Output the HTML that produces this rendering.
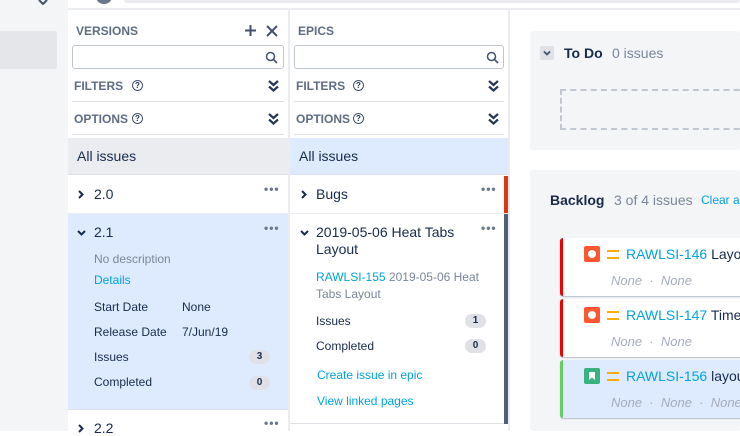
<!DOCTYPE html>
<html><head><meta charset="utf-8"><style>
*{box-sizing:border-box;margin:0;padding:0}
body{width:740px;height:431px;overflow:hidden;background:#fff;font-family:"Liberation Sans",sans-serif;color:#172b4d;position:relative;font-size:13px}
.a{position:absolute}
.h{font-size:12px;font-weight:bold;color:#5e6c84}
.s{border:1px solid #c1c7d0;border-radius:3px;height:24px;background:#fff}
.ln{height:1px;background:#dfe1e6}
.dots{color:#6b778c;font-size:12px;letter-spacing:1px;font-weight:bold}
.badge{background:#dfe1e6;border-radius:9px;width:21px;height:14px;font-size:10px;font-weight:bold;text-align:center;line-height:14px;color:#172b4d}
.blue{color:#00a3e0}
.card{left:560px;width:190px;height:58px;background:#fff;box-shadow:0 1px 1px rgba(9,30,66,.25);border-radius:3px}
.none{font-style:italic;color:#a5adba;font-size:13px}
.q{width:11px;height:11px;border:1.3px solid #42526e;border-radius:50%;font-size:8px;text-align:center;line-height:9px;font-weight:bold}
</style></head><body>
<div class="a" style="left:0;top:0;width:68px;height:431px;background:#f4f5f7"></div>
<div class="a" style="left:0;top:31px;width:57px;height:38px;background:#e4e6ea;border-radius:0 3px 3px 0"></div>
<svg class="a" style="left:38px;top:0" width="10" height="5"><path d="M1 0l4 4 4-4" fill="none" stroke="#42526e" stroke-width="2"/></svg>
<div class="a" style="left:68px;top:0;width:672px;height:10px;background:#fff;border-bottom:2px solid #ebecf0"></div>
<div class="a" style="left:96px;top:-10px;width:16px;height:14px;border-radius:50%;background:#6b778c"></div>
<div class="a" style="left:124px;top:0;width:616px;height:3px;background:#ebecf0;border-radius:0 0 3px 3px"></div>
<div class="a" style="left:288px;top:10px;width:2px;height:421px;background:#ebecf0"></div>
<div class="a" style="left:508px;top:10px;width:2px;height:421px;background:#ebecf0"></div>

<!-- versions -->
<div class="a h" style="left:76px;top:24px">VERSIONS</div>
<svg class="a" style="left:244px;top:24px" width="13" height="13"><path d="M6.5 1v11M1 6.5h11" stroke="#42526e" stroke-width="2"/></svg>
<svg class="a" style="left:266px;top:25px" width="12" height="12"><path d="M1 1l10 10M11 1l-10 10" stroke="#42526e" stroke-width="2"/></svg>
<div class="a s" style="left:72px;top:45px;width:212px"></div>
<svg class="a" style="left:265px;top:51px" width="13" height="13"><circle cx="5.5" cy="5.5" r="4" fill="none" stroke="#42526e" stroke-width="1.5"/><path d="M8.5 8.5l3.5 3.5" stroke="#42526e" stroke-width="1.6"/></svg>
<div class="a h" style="left:74px;top:79px">FILTERS</div>
<div class="a q" style="left:132px;top:80px">?</div>
<svg class="a" style="left:268px;top:80px" width="11" height="12"><path d="M1 1l4.5 4 4.5-4M1 6.5l4.5 4 4.5-4" fill="none" stroke="#253858" stroke-width="2.2"/></svg>
<div class="a ln" style="left:72px;top:101px;width:212px"></div>
<div class="a h" style="left:74px;top:112px">OPTIONS</div>
<div class="a q" style="left:132px;top:113px">?</div>
<svg class="a" style="left:268px;top:113px" width="11" height="12"><path d="M1 1l4.5 4 4.5-4M1 6.5l4.5 4 4.5-4" fill="none" stroke="#253858" stroke-width="2.2"/></svg>
<div class="a ln" style="left:72px;top:134px;width:212px"></div>
<div class="a" style="left:68px;top:138px;width:220px;height:37px;background:#ebecf0;border-bottom:1px solid #dfe1e6"></div>
<div class="a" style="left:77px;top:148px;font-size:14px">All issues</div>
<div class="a" style="left:68px;top:176px;width:220px;height:38px;border-bottom:1px solid #ebecf0"></div>
<svg class="a" style="left:78px;top:190px" width="6" height="9"><path d="M1 1l3.5 3.5L1 8" fill="none" stroke="#172b4d" stroke-width="2"/></svg>
<div class="a" style="left:94px;top:186px;font-size:14px">2.0</div>
<div class="a dots" style="left:264px;top:182px">•••</div>
<div class="a" style="left:68px;top:214px;width:220px;height:195px;background:#deebff"></div>
<svg class="a" style="left:77px;top:230px" width="9" height="6"><path d="M1 1l3.5 3.5L8 1" fill="none" stroke="#172b4d" stroke-width="2"/></svg>
<div class="a" style="left:94px;top:224px;font-size:14px">2.1</div>
<div class="a dots" style="left:264px;top:221px">•••</div>
<div class="a" style="left:94px;top:252px;color:#7a869a;font-size:12px">No description</div>
<div class="a blue" style="left:94px;top:273px;font-size:12px">Details</div>
<div class="a" style="left:94px;top:300px;font-size:12px">Start Date</div>
<div class="a" style="left:182px;top:300px;font-size:12px">None</div>
<div class="a" style="left:94px;top:325px;font-size:12px">Release Date</div>
<div class="a" style="left:182px;top:325px;font-size:12px">7/Jun/19</div>
<div class="a" style="left:94px;top:350px;font-size:12px">Issues</div>
<div class="a badge" style="left:249px;top:350px">3</div>
<div class="a" style="left:94px;top:375px;font-size:12px">Completed</div>
<div class="a badge" style="left:249px;top:376px">0</div>
<div class="a" style="left:68px;top:409px;width:220px;height:1px;background:#dfe1e6"></div>
<svg class="a" style="left:78px;top:424px" width="6" height="9"><path d="M1 1l3.5 3.5L1 8" fill="none" stroke="#172b4d" stroke-width="2"/></svg>
<div class="a" style="left:94px;top:420px;font-size:14px">2.2</div>
<div class="a dots" style="left:264px;top:416px">•••</div>

<!-- epics -->
<div class="a h" style="left:298px;top:24px">EPICS</div>
<div class="a s" style="left:294px;top:45px;width:210px"></div>
<svg class="a" style="left:486px;top:51px" width="13" height="13"><circle cx="5.5" cy="5.5" r="4" fill="none" stroke="#42526e" stroke-width="1.5"/><path d="M8.5 8.5l3.5 3.5" stroke="#42526e" stroke-width="1.6"/></svg>
<div class="a h" style="left:296px;top:79px">FILTERS</div>
<div class="a q" style="left:353px;top:80px">?</div>
<svg class="a" style="left:488px;top:80px" width="11" height="12"><path d="M1 1l4.5 4 4.5-4M1 6.5l4.5 4 4.5-4" fill="none" stroke="#253858" stroke-width="2.2"/></svg>
<div class="a ln" style="left:294px;top:101px;width:210px"></div>
<div class="a h" style="left:296px;top:112px">OPTIONS</div>
<div class="a q" style="left:353px;top:113px">?</div>
<svg class="a" style="left:488px;top:113px" width="11" height="12"><path d="M1 1l4.5 4 4.5-4M1 6.5l4.5 4 4.5-4" fill="none" stroke="#253858" stroke-width="2.2"/></svg>
<div class="a ln" style="left:294px;top:134px;width:210px"></div>
<div class="a" style="left:290px;top:138px;width:218px;height:37px;background:#deebff;border-bottom:1px solid #dfe1e6"></div>
<div class="a" style="left:299px;top:148px;font-size:14px">All issues</div>
<div class="a" style="left:290px;top:176px;width:218px;height:38px;border-bottom:1px solid #ebecf0"></div>
<div class="a" style="left:504px;top:176px;width:4px;height:37px;background:#de350b"></div>
<svg class="a" style="left:301px;top:190px" width="6" height="9"><path d="M1 1l3.5 3.5L1 8" fill="none" stroke="#172b4d" stroke-width="2"/></svg>
<div class="a" style="left:316px;top:186px;font-size:14px">Bugs</div>
<div class="a dots" style="left:481px;top:182px">•••</div>
<div class="a" style="left:504px;top:214px;width:4px;height:210px;background:#505f79"></div>
<div class="a" style="left:290px;top:423px;width:214px;height:1px;background:#dfe1e6"></div>
<svg class="a" style="left:300px;top:230px" width="9" height="6"><path d="M1 1l3.5 3.5L8 1" fill="none" stroke="#172b4d" stroke-width="2"/></svg>
<div class="a" style="left:316px;top:224px;font-size:14px;line-height:17px;width:160px">2019-05-06 Heat Tabs Layout</div>
<div class="a dots" style="left:481px;top:221px">•••</div>
<div class="a" style="left:316px;top:269px;font-size:12px;line-height:17px;color:#7a869a;width:170px"><span class="blue">RAWLSI-155</span> 2019-05-06 Heat Tabs Layout</div>
<div class="a" style="left:316px;top:314px;font-size:12px">Issues</div>
<div class="a badge" style="left:465px;top:314px">1</div>
<div class="a" style="left:316px;top:339px;font-size:12px">Completed</div>
<div class="a badge" style="left:465px;top:339px">0</div>
<div class="a blue" style="left:317px;top:368px;font-size:12px">Create issue in epic</div>
<div class="a blue" style="left:317px;top:394px;font-size:12px">View linked pages</div>

<!-- main -->
<div class="a" style="left:530px;top:31px;width:210px;height:119px;background:#f4f5f7;border-radius:3px"></div>
<div class="a" style="left:540px;top:46px;width:14px;height:14px;background:#dfe1e6;border-radius:2px"><svg width="14" height="14"><path d="M4 5.5l3 3 3-3" fill="none" stroke="#42526e" stroke-width="1.8"/></svg></div>
<div class="a" style="left:564px;top:45px;font-size:14px;font-weight:bold">To Do</div>
<div class="a" style="left:612px;top:45px;font-size:14px;color:#7a869a">0 issues</div>
<div class="a" style="left:560px;top:89px;width:190px;height:41px;border:2px dashed #c1c7d0"></div>
<div class="a" style="left:530px;top:170px;width:210px;height:261px;background:#f4f5f7;border-radius:3px"></div>
<div class="a" style="left:550px;top:192px;font-size:14px;font-weight:bold">Backlog</div>
<div class="a" style="left:614px;top:192px;font-size:14px;color:#7a869a">3 of 4 issues</div>
<div class="a blue" style="left:701px;top:193px;font-size:12px;white-space:nowrap">Clear all</div>

<div class="a card" style="top:238px;border-left:3px solid #e00"></div>
<div class="a card" style="top:299px;border-left:3px solid #e00"></div>
<div class="a card" style="top:360px;border-left:3px solid #6c6;background:#deebff"></div>
<div class="a" style="left:584px;top:246px;width:16px;height:16px;background:#ff5630;border-radius:2px"><div style="margin:4px;width:8px;height:8px;border-radius:50%;background:#fff"></div></div>
<div class="a" style="left:584px;top:307px;width:16px;height:16px;background:#ff5630;border-radius:2px"><div style="margin:4px;width:8px;height:8px;border-radius:50%;background:#fff"></div></div>
<div class="a" style="left:584px;top:368px;width:16px;height:16px;background:#36b37e;border-radius:2px"><svg width="16" height="16"><path d="M5 4h6v8l-3-2.5-3 2.5z" fill="#fff"/></svg></div>
<div class="a" style="left:607px;top:250px;width:12px;height:9px;border-top:2px solid #ffab00;border-bottom:2px solid #ffab00"></div>
<div class="a" style="left:607px;top:311px;width:12px;height:9px;border-top:2px solid #ffab00;border-bottom:2px solid #ffab00"></div>
<div class="a" style="left:607px;top:372px;width:12px;height:9px;border-top:2px solid #ffab00;border-bottom:2px solid #ffab00"></div>
<div class="a" style="left:626px;top:246px;font-size:14px;white-space:nowrap"><span class="blue">RAWLSI-146</span> Layout</div>
<div class="a" style="left:626px;top:307px;font-size:14px;white-space:nowrap"><span class="blue">RAWLSI-147</span> Time</div>
<div class="a" style="left:626px;top:368px;font-size:14px;white-space:nowrap"><span class="blue">RAWLSI-156</span> layout</div>
<div class="a none" style="left:611px;top:273px;white-space:nowrap">None &nbsp;·&nbsp; None</div>
<div class="a none" style="left:611px;top:334px;white-space:nowrap">None &nbsp;·&nbsp; None</div>
<div class="a none" style="left:611px;top:395px;white-space:nowrap">None &nbsp;·&nbsp; None &nbsp;·&nbsp; None</div>
</body></html>
